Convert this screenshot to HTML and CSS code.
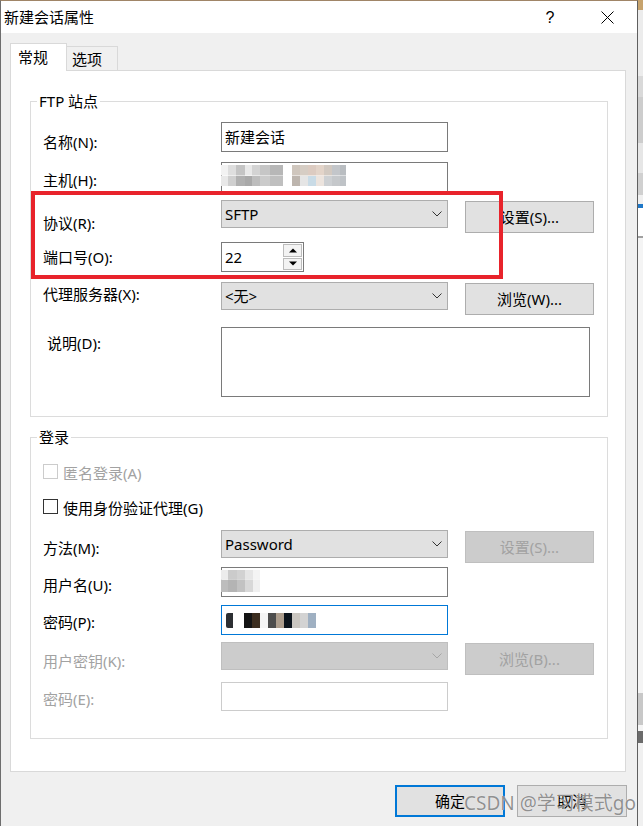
FILE: index.html
```html
<!DOCTYPE html>
<html lang="zh-CN">
<head>
<meta charset="utf-8">
<title>新建会话属性</title>
<link rel="stylesheet" href="styles.css">
</head>
<body>
<div class="screen">
  <div class="window">
    <div class="titlebar">
      <span class="title">新建会话属性</span>
      <div class="tb-btns">
        <span class="tb-btn tb-help">?</span>
        <span class="tb-btn"><svg class="close-icon" width="13" height="13" viewBox="0 0 13 13"><path d="M0.5 0.5L12.5 12.5M12.5 0.5L0.5 12.5" stroke="#000" stroke-width="1" fill="none"/></svg></span>
      </div>
    </div>

    <div class="client">
      <div class="tabs">
        <div class="tab tab-active">常规</div>
        <div class="tab tab-idle">选项</div>
      </div>

      <div class="panel">
        <fieldset class="group group-ftp">
          <legend>FTP 站点</legend>
          <div class="form">
            <div class="row r-name">
              <span class="lbl off-10">名称(N):</span>
              <div class="edit"><span class="val">新建会话</span></div>
            </div>
            <div class="row r-host">
              <span class="lbl off-8">主机(H):</span>
              <div class="edit edit-top"><span class="mosaic mosaic-host"></span></div>
            </div>
            <div class="row r-proto">
              <span class="lbl off-13">协议(R):</span>
              <div class="combo"><span class="val">SFTP</span><svg class="chev" width="10" height="6" viewBox="0 0 10 6"><path d="M0.5 0.5L5 5L9.5 0.5" stroke="#333" stroke-width="1" fill="none"/></svg></div>
              <button class="btn">设置(S)...</button>
            </div>
            <div class="row r-port">
              <span class="lbl off-5">端口号(O):</span>
              <div class="port">
                <span class="port-val">22</span>
                <div class="spin">
                  <span class="spin-btn"><svg width="8" height="5" viewBox="0 0 8 5"><path d="M0 4.5L4 0.5L8 4.5Z" fill="#000"/></svg></span>
                  <span class="spin-btn"><svg width="8" height="5" viewBox="0 0 8 5"><path d="M0 0.5L4 4.5L8 0.5Z" fill="#000"/></svg></span>
                </div>
              </div>
            </div>
            <div class="row r-proxy">
              <span class="lbl off-2">代理服务器(X):</span>
              <div class="combo"><span class="val">&lt;无&gt;</span><svg class="chev" width="10" height="6" viewBox="0 0 10 6"><path d="M0.5 0.5L5 5L9.5 0.5" stroke="#333" stroke-width="1" fill="none"/></svg></div>
              <button class="btn btn-low">浏览(W)...</button>
            </div>
            <div class="row r-desc">
              <span class="lbl off-6 lbl-indent">说明(D):</span>
              <div class="memo"></div>
            </div>
          </div>
        </fieldset>

        <fieldset class="group group-login">
          <legend>登录</legend>
          <div class="form">
            <div class="row r-anon">
              <span class="cbox cbox-disabled"></span>
              <span class="ctext ctext-disabled">匿名登录(A)</span>
            </div>
            <div class="row r-agent">
              <span class="cbox"></span>
              <span class="ctext">使用身份验证代理(G)</span>
            </div>
            <div class="row r-method">
              <span class="lbl off-8">方法(M):</span>
              <div class="combo"><span class="val">Password</span><svg class="chev" width="10" height="6" viewBox="0 0 10 6"><path d="M0.5 0.5L5 5L9.5 0.5" stroke="#333" stroke-width="1" fill="none"/></svg></div>
              <button class="btn btn-disabled">设置(S)...</button>
            </div>
            <div class="row r-user">
              <span class="lbl off-8">用户名(U):</span>
              <div class="edit edit-top"><span class="mosaic mosaic-user"></span></div>
            </div>
            <div class="row r-pass">
              <span class="lbl off-7">密码(P):</span>
              <div class="edit edit-focus"><span class="mosaic mosaic-pass"></span></div>
            </div>
            <div class="row r-key">
              <span class="lbl lbl-disabled off-9">用户密钥(K):</span>
              <div class="combo combo-disabled"><span class="val"></span><svg class="chev" width="10" height="6" viewBox="0 0 10 6"><path d="M0.5 0.5L5 5L9.5 0.5" stroke="#a6a6a6" stroke-width="1" fill="none"/></svg></div>
              <button class="btn btn-disabled">浏览(B)...</button>
            </div>
            <div class="row r-pass2">
              <span class="lbl lbl-disabled off-7">密码(E):</span>
              <div class="edit edit-disabled"></div>
            </div>
          </div>
        </fieldset>
      </div>

      <div class="footer">
        <button class="dlg-btn dlg-btn-default">确定</button>
        <button class="dlg-btn">取消</button>
      </div>
    </div>

    <div class="annot"></div>
    <span class="watermark">CSDN @学习模式go</span>
  </div>
  <div class="backdrop"></div>
</div>
</body>
</html>
```

FILE: styles.css
```css
* { box-sizing: border-box; }
html, body { margin: 0; padding: 0; }
body {
  width: 643px;
  height: 826px;
  overflow: hidden;
  background: #f2f2f2;
  font-family: "Noto Sans", "Noto Sans CJK SC", sans-serif;
  font-size: 15px;
  color: #000;
}
.screen { display: flex; height: 826px; }

.window {
  position: relative;
  flex: none;
  width: 638px;
  height: 826px;
  display: flex;
  flex-direction: column;
  background: #f0f0f0;
  border-left: 1px solid #6e6e6e;
  border-right: 1px solid #5f5f5f;
  border-top: 1px solid #a08567;
}

/* title bar */
.titlebar {
  flex: none;
  height: 32px;
  background: #fff;
  display: flex;
  align-items: center;
  justify-content: space-between;
}
.title { padding-left: 3px; line-height: 20px; }
.tb-btns { display: flex; height: 100%; }
.tb-btn {
  width: 58px;
  height: 32px;
  display: flex;
  align-items: center;
  justify-content: center;
}
.tb-help { font-family: "Liberation Sans", sans-serif; font-size: 16px; padding-top: 1px; }
.close-icon { margin-left: -2px; }

/* client area */
.client {
  flex: 1;
  display: flex;
  flex-direction: column;
  padding: 10px 11px 0 9px;
}
.tabs {
  display: flex;
  align-items: flex-end;
  height: 28px;
  margin-bottom: -1px;
}
.tab {
  border: 1px solid #d9d9d9;
  border-bottom: none;
  line-height: 20px;
}
.tab-active {
  position: relative;
  z-index: 1;
  width: 57px;
  height: 28px;
  background: #fff;
  padding: 3px 0 0 7px;
}
.tab-idle {
  width: 51px;
  height: 25px;
  border-left: none;
  background: #f0f0f0;
  padding: 2px 0 0 5px;
}

.panel {
  flex: none;
  width: 616px;
  height: 702px;
  background: #fff;
  border: 1px solid #d9d9d9;
  padding: 21px 17px 0 19px;
}

.group {
  margin: 0;
  min-width: 0;
  border: 1px solid #dcdcdc;
  padding: 12px 0 19px 6px;
}
.group legend {
  padding: 0 2px;
  line-height: 18px;
  font-size: 15px;
}
.group-login {
  margin-top: 11px;
  padding-top: 18px;
  padding-bottom: 27px;
}

.form {
  margin-left: 6px;
  display: flex;
  flex-direction: column;
}
.row { display: flex; align-items: flex-start; flex: none; }

.r-name { height: 40px; }
.r-host { height: 38px; }
.r-proto { height: 42px; }
.r-port { height: 40px; }
.r-proxy { height: 45px; }
.r-desc { height: 70px; }

.r-anon { height: 35px; }
.r-agent { height: 31px; }
.r-method { height: 37px; }
.r-user { height: 38px; }
.r-pass { height: 37px; }
.r-key { height: 40px; }
.r-pass2 { height: 29px; }

.lbl { flex: none; width: 178px; line-height: 20px; white-space: nowrap; }
.lbl-indent { padding-left: 4px; }
.lbl-disabled { color: #a2a2a2; }
.off-2 { margin-top: 2px; }
.off-5 { margin-top: 5px; }
.off-6 { margin-top: 6px; }
.off-7 { margin-top: 7px; }
.off-8 { margin-top: 8px; }
.off-9 { margin-top: 9px; }
.off-10 { margin-top: 10px; }
.off-13 { margin-top: 13px; }

.val { line-height: 20px; white-space: nowrap; }

.edit {
  flex: none;
  width: 227px;
  height: 30px;
  border: 1px solid #7a7a7a;
  background: #fff;
  padding-left: 3px;
  display: flex;
  align-items: center;
}
.edit-top { align-items: flex-start; }
.edit-focus { border-color: #0078d7; }
.edit-disabled { height: 29px; border-color: #cccccc; }

.combo {
  flex: none;
  width: 227px;
  height: 28px;
  border: 1px solid #adadad;
  background: #e1e1e1;
  display: flex;
  align-items: center;
  justify-content: space-between;
  padding: 0 5px 0 3px;
}
.combo-disabled { background: #cccccc; border-color: #bfbfbf; }
.chev { flex: none; }

.btn {
  flex: none;
  margin: 1px 0 0 17px;
  width: 129px;
  height: 32px;
  padding: 0;
  border: 1px solid #adadad;
  background: #e1e1e1;
  font: inherit;
  color: #000;
  line-height: 20px;
  display: flex;
  align-items: center;
  justify-content: center;
}
.btn-low { margin-top: 1px; }
.btn-disabled { background: #cccccc; border-color: #bfbfbf; color: #a2a2a2; }

.port {
  flex: none;
  width: 83px;
  height: 30px;
  border: 1px solid #7a7a7a;
  background: #fff;
  display: flex;
}
.port-val { flex: 1; padding-left: 3px; line-height: 28px; }
.spin {
  flex: none;
  width: 20px;
  display: flex;
  flex-direction: column;
  gap: 1px;
  padding: 1px 1px 1px 0;
}
.spin-btn {
  flex: 1;
  border: 1px solid #bcbcbc;
  background: #f3f3f3;
  display: flex;
  align-items: center;
  justify-content: center;
}

.memo {
  flex: none;
  width: 369px;
  height: 70px;
  border: 1px solid #7a7a7a;
  background: #fff;
}

.cbox {
  flex: none;
  width: 15px;
  height: 15px;
  border: 1px solid #333;
  background: #fff;
}
.cbox-disabled { border-color: #cccccc; }
.ctext { margin: -1px 0 0 5px; line-height: 20px; white-space: nowrap; }
.ctext-disabled { color: #a2a2a2; }

/* redacted values */
.mosaic { display: block; flex: none; }
.mosaic-host {
  width: 127px;
  height: 21px;
  margin: 2px 0 0 -4px;
  background:
    linear-gradient(90deg, #f2f2f2 0 7px, #dedede 7px 15px, #c4c4c4 15px 24px, #e9e9e9 24px 31px, #d3d3d3 31px 39px, #c6c6c6 39px 49px, #b7b7b7 49px 62px, #fff 62px 71px, #cfc6bd 71px 79px, #d6cdc4 79px 87px, #dccbc1 87px 95px, #e3d4c9 95px 103px, #d2c9c1 103px 111px, #c3c6ca 111px 119px, #b9bdc1 119px 125px, #fff 125px) top / 100% 50% no-repeat,
    linear-gradient(90deg, #e8e8e8 0 7px, #cfcfcf 7px 15px, #b0b0b0 15px 24px, #a9a9a9 24px 31px, #bdbdbd 31px 39px, #cbcbcb 39px 49px, #bfbfbf 49px 62px, #fff 62px 71px, #bdb5ae 71px 79px, #e5e5e5 79px 87px, #c9dbe6 87px 95px, #ece4de 95px 103px, #cdd0d3 103px 111px, #c5c8cb 111px 119px, #bfc3c7 119px 125px, #fff 125px) bottom / 100% 50% no-repeat;
}
.mosaic-user {
  width: 39px;
  height: 22px;
  margin: 2px 0 0 -4px;
  background:
    linear-gradient(90deg, #ececec 0 7px, #cbcbcb 7px 16px, #d2d2d2 16px 24px, #e6e6e6 24px 32px, #f4f4f4 32px) top / 100% 45% no-repeat,
    linear-gradient(90deg, #bdbdbd 0 7px, #b4b4b4 7px 16px, #c2c2c2 16px 24px, #d8d8d8 24px 32px, #f0f0f0 32px) bottom / 100% 55% no-repeat;
}
.mosaic-pass {
  width: 92px;
  height: 15px;
  margin: 0 0 0 1px;
  border-radius: 2px;
  background:
    linear-gradient(90deg, #2c2f33 0 7px, #fff 7px 18px, #141414 18px 26px, #3c2d1f 26px 34px, #f5f5f5 34px 42px, #4d4d4d 42px 50px, #ad9e8e 50px 58px, #0c141c 58px 66px, #cac6c0 66px 74px, #d3d3d3 74px 82px, #9fb0c2 82px 90px, #fff 90px);
}

.footer {
  display: flex;
  justify-content: flex-end;
  gap: 12px;
  margin: 13px -1px 0 0;
}
.dlg-btn {
  width: 110px;
  height: 32px;
  padding: 0;
  border: 1px solid #adadad;
  background: #e1e1e1;
  font: inherit;
  color: #000;
  line-height: 20px;
}
.dlg-btn-default { border: 2px solid #0078d7; }

/* screenshot annotation + watermark overlays */
.annot {
  position: absolute;
  left: 30px;
  top: 190px;
  width: 472px;
  height: 88px;
  border: 4px solid #e8232b;
  pointer-events: none;
}
.watermark {
  position: absolute;
  left: 463px;
  top: 791px;
  font-size: 19px;
  line-height: 22px;
  color: rgba(125, 125, 125, 0.85);
  text-shadow: 0 0 1px rgba(255, 255, 255, 0.9);
  white-space: nowrap;
  pointer-events: none;
}

.backdrop {
  flex: 1;
  background: linear-gradient(180deg,
    #c7a36d 0 10px, #ececec 10px 76px, #d9d9d9 76px 97px, #cdcdcd 97px 143px,
    #e6e6e6 143px 173px, #d0d0d0 173px 195px, #f0f0f0 195px 204px, #1f78c8 204px 208px,
    #fff 208px 236px, #a0a0a0 236px 238px, #f4f4f4 238px 693px, #c8c8c8 693px 725px,
    #f4f4f4 725px 731px, #6b6b6b 731px 743px, #f0f0f0 743px);
}
```
